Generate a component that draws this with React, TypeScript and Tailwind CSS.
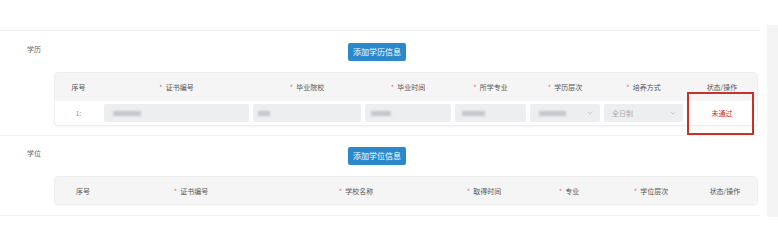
import { ChevronDown } from 'lucide-react'

const eduCols = [
  { label: '序号', req: false, w: 'w-[47px]' },
  { label: '证书编号', req: true, w: 'w-[149px]' },
  { label: '毕业院校', req: true, w: 'w-[112px]' },
  { label: '毕业时间', req: true, w: 'w-[90px]' },
  { label: '所学专业', req: true, w: 'w-[75px]' },
  { label: '学历层次', req: true, w: 'w-[74px]' },
  { label: '培养方式', req: true, w: 'w-[83px]' },
  { label: '状态/操作', req: false, w: 'w-[74px]' },
]

const degreeCols = [
  { label: '序号', req: false, w: 'w-[56px]' },
  { label: '证书编号', req: true, w: 'w-[160px]' },
  { label: '学校名称', req: true, w: 'w-[170px]' },
  { label: '取得时间', req: true, w: 'w-[86px]' },
  { label: '专业', req: true, w: 'w-[84px]' },
  { label: '学位层次', req: true, w: 'w-[80px]' },
  { label: '状态/操作', req: false, w: 'w-[68px]' },
]

type Col = { label: string; req: boolean; w: string }

function HeadRow({ cols, h }: { cols: Col[]; h: string }) {
  return (
    <div className={`flex items-center bg-[#f5f5f5] ${h}`}>
      {cols.map(c => (
        <div key={c.label} className={`${c.w} shrink-0 text-center text-[7px] leading-[10px] text-[#555]`}>
          {c.req && <span className="mr-[3px] text-[#e07070]">*</span>}
          {c.label}
        </div>
      ))}
    </div>
  )
}

// blurred, redacted value inside an input
function Redacted({ w }: { w: string }) {
  return <div className={`h-[5px] rounded-[1px] bg-[#c4c7cc] blur-[1px] ${w}`} />
}

function Section({ label, button, top, children }: { label: string; button: string; top: string; children: React.ReactNode }) {
  return (
    <div className="border-t border-[#f0f0f0]">
      <div className={`flex ${top}`}>
        <div className="w-[348px] shrink-0 pl-[27px] pt-[1px] text-[7px] leading-[10px] text-[#666]">{label}</div>
        <button className="flex h-[18px] w-[58px] items-center justify-center rounded-[2px] bg-[#2b89cb] text-[8px] text-white">
          {button}
        </button>
      </div>
      {children}
    </div>
  )
}

export default function App() {
  return (
    <div className="flex h-[246px] w-[778px] bg-white font-['Noto_Sans_CJK_SC','Noto_Sans',sans-serif]">
      <div className="w-[760px] shrink-0 pt-[30px]">
        {/* 学历 */}
        <Section label="学历" button="添加学历信息" top="pt-[12px]">
          <div className="relative ml-[54px] mt-[11px] mb-[9px] w-[704px]">
            <div className="overflow-hidden rounded-[4px] border border-[#eeeeee] bg-white shadow-[0_1px_2px_rgba(0,0,0,0.04)]">
              <HeadRow cols={eduCols} h="h-[28px]" />
              <div className="flex h-[24px] items-center text-[7px] leading-[10px]">
                <div className="w-[47px] shrink-0 text-center text-[#999]">1:</div>
                <div className="w-[149px] shrink-0 px-[2px]">
                  <div className="flex h-[18px] items-center rounded-[2px] bg-[#eceef0] pl-[9px]"><Redacted w="w-[28px]" /></div>
                </div>
                <div className="w-[112px] shrink-0 px-[2px]">
                  <div className="flex h-[18px] items-center rounded-[2px] bg-[#eceef0] pl-[5px]"><Redacted w="w-[12px]" /></div>
                </div>
                <div className="w-[90px] shrink-0 px-[2px]">
                  <div className="flex h-[18px] items-center rounded-[2px] bg-[#eceef0] pl-[6px]"><Redacted w="w-[20px]" /></div>
                </div>
                <div className="w-[75px] shrink-0 px-[2px]">
                  <div className="flex h-[18px] items-center rounded-[2px] bg-[#eceef0] pl-[7px]"><Redacted w="w-[23px]" /></div>
                </div>
                <div className="w-[74px] shrink-0 px-[2px]">
                  <div className="flex h-[18px] items-center justify-between rounded-[2px] bg-[#eceef0] pl-[9px] pr-[6px]">
                    <Redacted w="w-[27px]" />
                    <ChevronDown size={8} strokeWidth={1.5} className="text-[#aaa]" />
                  </div>
                </div>
                <div className="w-[83px] shrink-0 px-[2px]">
                  <div className="flex h-[18px] items-center justify-between rounded-[2px] bg-[#eceef0] pl-[8px] pr-[6px]">
                    <span className="text-[#aaa]">全日制</span>
                    <ChevronDown size={8} strokeWidth={1.5} className="text-[#aaa]" />
                  </div>
                </div>
                <div className="w-[74px] shrink-0 text-center text-[#c8302c]">未通过</div>
              </div>
            </div>
            {/* 标注框 */}
            <div className="absolute left-[633px] top-[20px] h-[43px] w-[67px] border-2 border-[#c9302c]" />
          </div>
        </Section>

        {/* 学位 */}
        <Section label="学位" button="添加学位信息" top="pt-[11px]">
          <div className="ml-[54px] mt-[11px] mb-[10px] w-[704px] overflow-hidden rounded-[4px] border border-[#eeeeee] shadow-[0_1px_2px_rgba(0,0,0,0.04)]">
            <HeadRow cols={degreeCols} h="h-[27px]" />
          </div>
        </Section>
        <div className="border-t border-[#f0f0f0]" />
      </div>
      <div className="ml-[7px] mt-[25px] h-[192px] w-[11px] bg-[#f4f4f4]" />
    </div>
  )
}
